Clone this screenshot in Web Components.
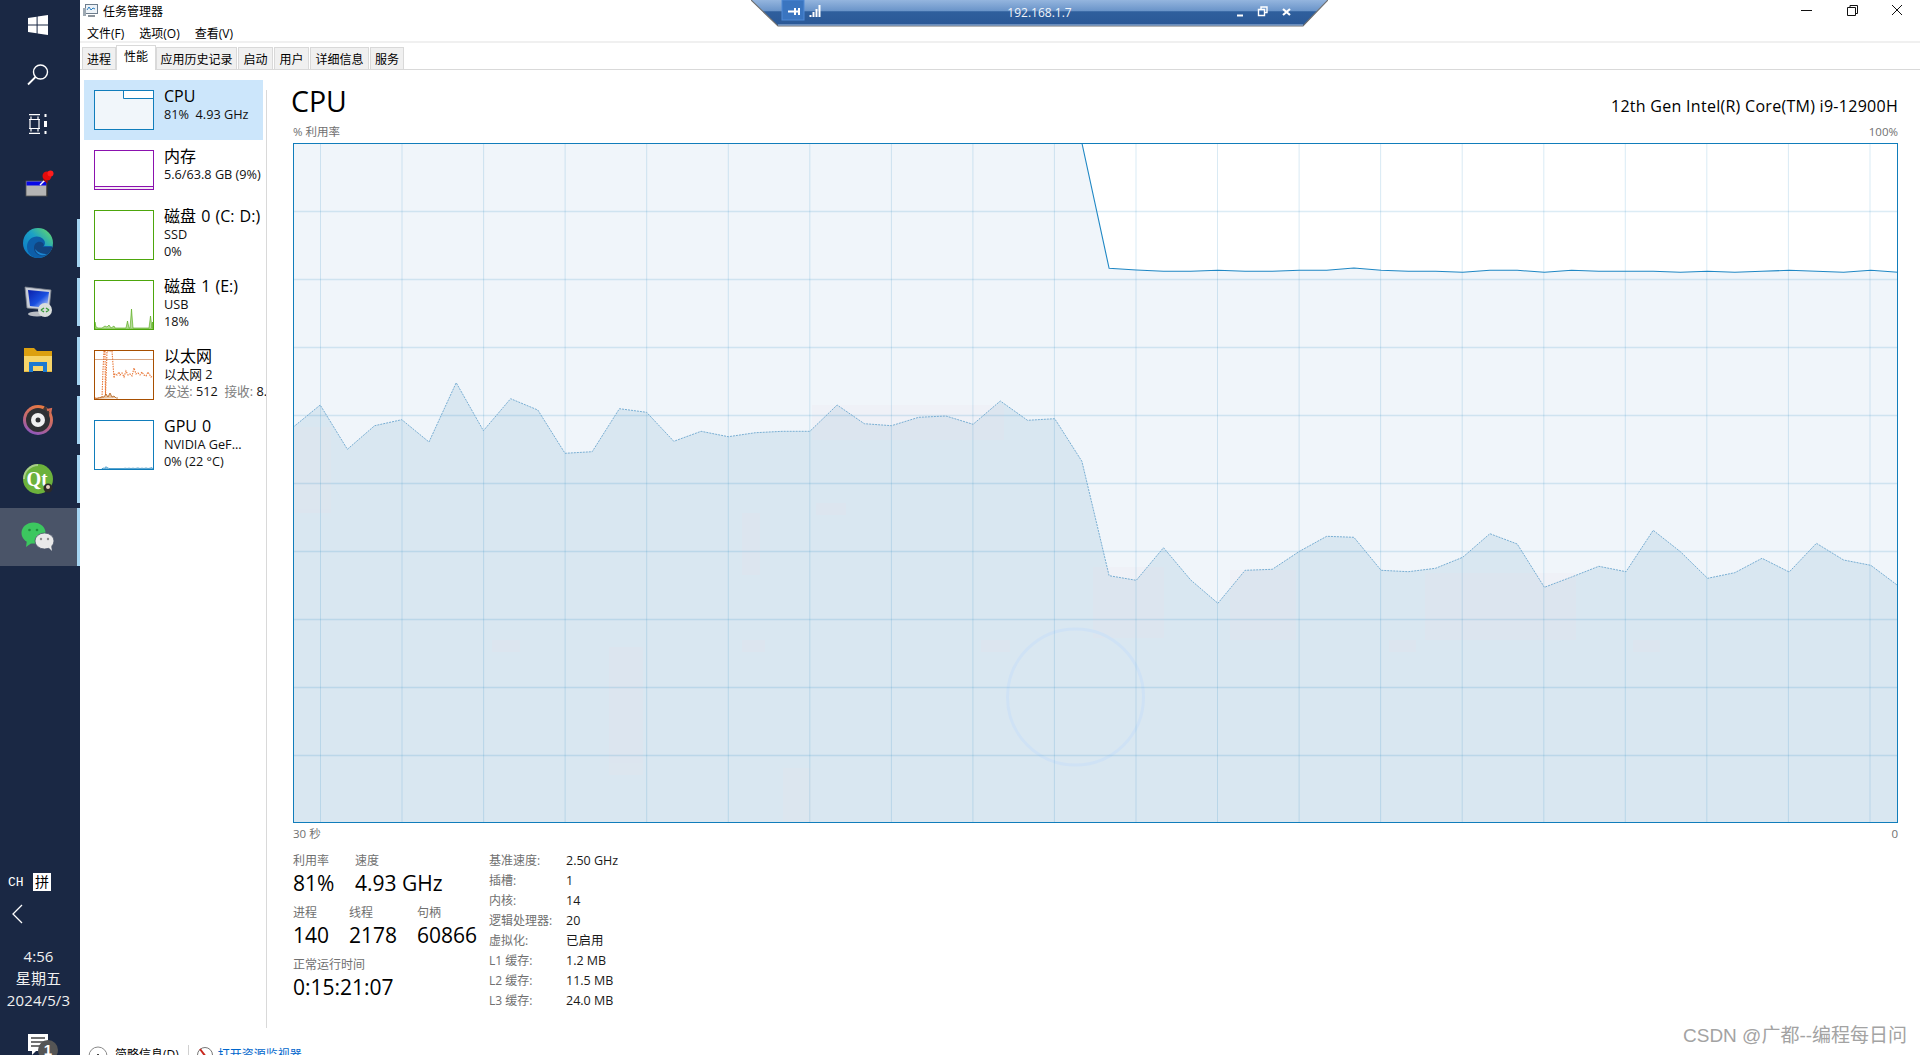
<!DOCTYPE html>
<html lang="zh">
<head>
<meta charset="utf-8">
<title>任务管理器</title>
<style>
html,body{margin:0;padding:0;height:1055px;overflow:hidden;background:#fff}
body{display:flex;font-family:"Open Sans","Noto Sans CJK SC",sans-serif;color:#000}
</style>
</head>
<body>
<x-taskbar>
  <x-tb-item h="50"><svg width="20" height="20" viewBox="0 0 20 20"><path fill="#fff" d="M0 3 8.600 1.700V9.500H0ZM9.600 1.500 20 0V9.500H9.600ZM0 10.500H8.600V18.300L0 17ZM9.600 10.500H20V20L9.600 18.500Z"/></svg></x-tb-item>
  <x-tb-item h="50"><svg width="22" height="22" viewBox="0 0 22 22" fill="none" stroke="#fff" stroke-width="1.400"><circle cx="13.500" cy="8" r="7"/><path d="M8.500 13 1 20.500" stroke-width="1.800"/></svg></x-tb-item>
  <x-tb-item h="48"><svg width="20" height="20" viewBox="0 0 20 20" fill="none" stroke="#fff" stroke-width="1.200"><path d="M1 .7H12M1 19.300H12M3 2.500V5.500M10 2.500V5.500M3 14.500V17.500M10 14.500V17.500M1 5.500H12M1 14.500H12M2 5.500V14.500M11 5.500V14.500"/><path d="M17.500 0V3M17.500 17V20" stroke-width="2"/><rect x="16" y="7" width="3" height="6" fill="#fff" stroke="none"/></svg></x-tb-item>
  <x-tb-item h="59" style="margin-top:6px"><svg width="32" height="32" viewBox="0 0 32 32"><rect x="4" y="13" width="21" height="15" fill="#b4b4b4" stroke="#555" stroke-width=".8"/><rect x="4.500" y="13.500" width="20" height="4" fill="#0707e6"/><path d="M25 28V14" stroke="#222"/><path d="M18 17l6-6" stroke="#fff" stroke-width="1.500"/><circle cx="25" cy="8" r="4.500" fill="#e40b0b"/><circle cx="28.500" cy="5.500" r="3" fill="#ff1d1d"/><path d="M22 11l4 3-1 1-4-3z" fill="#a00"/></svg></x-tb-item>
  <x-tb-item h="59" running><svg width="32" height="32" viewBox="0 0 32 32"><defs><linearGradient id="eg" x1="0" y1="1" x2="1" y2="0"><stop offset="0" stop-color="#0a74c7"/><stop offset=".55" stop-color="#1ba0c6"/><stop offset="1" stop-color="#6fe05d"/></linearGradient></defs><circle cx="16" cy="16" r="15" fill="url(#eg)"/><path d="M5 20C5 12 12 8 18 10 23 12 24 16 22 19H30C29 27 22 31 16 31 10 31 5 26 5 20Z" fill="#0d5ea8"/><path d="M12 21C12 16 16 14 19 15 22 16 23 19 20 20H31C30 22 28 26 24 28 18 30 12 27 12 21Z" fill="#12447f"/><path d="M13 22C14 27 20 30 25 27 21 27 16 26 13 22Z" fill="#1b86d3"/></svg></x-tb-item>
  <x-tb-item h="59" running><svg width="32" height="32" viewBox="0 0 32 32"><ellipse cx="15" cy="28" rx="9" ry="2.500" fill="#b9bcc2"/><path d="M3 1 29 4 27 24 5 22Z" fill="#c9ced8" stroke="#7b818b" stroke-width=".8"/><defs><linearGradient id="rg" x1="0" y1="0" x2="1" y2="1"><stop offset="0" stop-color="#0a1fa8"/><stop offset=".55" stop-color="#1a50e0"/><stop offset="1" stop-color="#d8e6ff"/></linearGradient></defs><path d="M6 4 27 6 25 22 8 20Z" fill="url(#rg)"/><circle cx="23" cy="24" r="7" fill="#d9dedc"/><path d="M19 24l3-2M19 24l3 2M27 24l-3-2M27 24l-3 2" stroke="#3a9a3c" stroke-width="1.500" fill="none"/></svg></x-tb-item>
  <x-tb-item h="59" running><svg width="30" height="26" viewBox="0 0 30 26"><path d="M1 0H11L14 3H29V11H1Z" fill="#dca010"/><path d="M1 8H29V23H1Z" fill="#f6d56a"/><path d="M6 14H24V24H20V18H10V24H6Z" fill="#1b79d1"/><path d="M1 23H6V24H1ZM24 23H29V24H24Z" fill="#e8b93d"/></svg></x-tb-item>
  <x-tb-item h="59" running><svg width="32" height="32" viewBox="0 0 32 32"><defs><linearGradient id="mg" x1=".7" y1="0" x2=".3" y2="1"><stop offset="0" stop-color="#ec7b3d"/><stop offset=".5" stop-color="#c76a6e"/><stop offset="1" stop-color="#8a56c2"/></linearGradient></defs><circle cx="16" cy="16" r="15" fill="url(#mg)"/><circle cx="16" cy="16" r="12" fill="#2f3033"/><path d="M23 2 29 10 26 12 21 5Z" fill="#2f3033" opacity=".9"/><path d="M25 6 29 5 28 11" fill="none" stroke="#d66d55" stroke-width="2"/><circle cx="16" cy="16" r="7" fill="#f0f0f0"/><circle cx="16" cy="16" r="2.500" fill="#2f3033"/></svg></x-tb-item>
  <x-tb-item h="59" running><svg width="32" height="32" viewBox="0 0 32 32"><circle cx="16" cy="16" r="15" fill="#6cb23c"/><path d="M1 16A15 15 0 0 1 16 1V3A13 13 0 0 0 3 16Z" fill="#d9e6c8" opacity=".55"/><text x="15" y="22.500" text-anchor="middle" font-family="Liberation Serif" font-weight="700" font-size="20" textLength="21" lengthAdjust="spacingAndGlyphs" fill="#fff">Qt</text><circle cx="26" cy="25" r="4.500" fill="#2d2a28"/><circle cx="26" cy="24" r="2" fill="#e8d3c2"/></svg></x-tb-item>
  <x-tb-item h="58" running active><svg width="34" height="30" viewBox="0 0 34 30"><ellipse cx="12.500" cy="11" rx="12" ry="10.500" fill="#3cc75f"/><path d="M6 18 5 25 12 20Z" fill="#3cc75f"/><circle cx="8.500" cy="8" r="1.300" fill="#1e8e3c"/><circle cx="16" cy="8" r="1.300" fill="#1e8e3c"/><ellipse cx="23.500" cy="19" rx="9.500" ry="8" fill="#e9e9e9" stroke="#4a5468" stroke-width=".8"/><path d="M27 25 31 29 30 23Z" fill="#e9e9e9"/><circle cx="20" cy="17" r="1.200" fill="#8d8d8d"/><circle cx="27" cy="17" r="1.200" fill="#8d8d8d"/></svg></x-tb-item>
  <x-tb-bottom></x-tb-bottom>
</x-taskbar>

<x-taskmgr>
  <x-titlebar>任务管理器</x-titlebar>
  <x-menubar><span>文件(F)</span><span>选项(O)</span><span>查看(V)</span></x-menubar>
  <x-tabs>
    <x-tab style="width:34px">进程</x-tab>
    <x-tab selected style="width:38px">性能</x-tab>
    <x-tab style="width:81px">应用历史记录</x-tab>
    <x-tab style="width:35px">启动</x-tab>
    <x-tab style="width:35px">用户</x-tab>
    <x-tab style="width:59px">详细信息</x-tab>
    <x-tab style="width:34px">服务</x-tab>
  </x-tabs>
  <x-perf-body>
    <x-side-panel>
      <x-perf-item selected h="60">
        <svg slot="thumb" width="60" height="40" viewBox="0 0 60 40"><rect x=".5" y=".5" width="59" height="39" fill="#f1f6fa"/><path d="M29.500 .5V8.500H59.500V.5Z" fill="#fff" stroke="#117dbb"/><rect x=".5" y=".5" width="59" height="39" fill="none" stroke="#117dbb"/></svg>
        <span slot="title">CPU</span><span>81%&nbsp; 4.93 GHz</span>
      </x-perf-item>
      <x-perf-item h="60">
        <svg slot="thumb" width="60" height="40" viewBox="0 0 60 40"><rect x=".5" y=".5" width="59" height="39" fill="#fff"/><rect x=".5" y="36.500" width="59" height="3" fill="#f4eaf6" stroke="#8b12ae"/><rect x=".5" y=".5" width="59" height="39" fill="none" stroke="#8b12ae"/></svg>
        <span slot="title">内存</span><span>5.6/63.8 GB (9%)</span>
      </x-perf-item>
      <x-perf-item h="70">
        <svg slot="thumb" width="60" height="50" viewBox="0 0 60 50"><rect x=".5" y=".5" width="59" height="49" fill="#fff" stroke="#4da60c"/></svg>
        <span slot="title">磁盘 0 (C: D:)</span><span>SSD</span><br><span>0%</span>
      </x-perf-item>
      <x-perf-item h="70">
        <svg slot="thumb" width="60" height="50" viewBox="0 0 60 50"><path d="M1 49V42L2 47 4 48 8 48 11 46 13 47 15 45 17 48 20 46 21 48 32 48 33.500 41 35 48 36 48 37.500 29 39 48 55 48 56.500 36 58 48 58.500 42 59 49Z" fill="#b5dc98" stroke="#4da60c" stroke-width=".6"/><rect x=".5" y=".5" width="59" height="49" fill="none" stroke="#4da60c"/></svg>
        <span slot="title">磁盘 1 (E:)</span><span>USB</span><br><span>18%</span>
      </x-perf-item>
      <x-perf-item h="70">
        <svg slot="thumb" width="60" height="50" viewBox="0 0 60 50"><rect x=".5" y=".5" width="59" height="49" fill="#fff"/><path d="M1 9.500H59" stroke="#d9a988"/><path d="M1 48 8 48 9 20 10 1 11 1 11.500 46 13 1 15 1 16 1 18 1 20 28 21 24 23 25 25 22 26 25 28 23 30 27 32 21 34 25 36 24 38 26 40 18 42 24 44 23 46 25 48 22 50 25 52 26 54 22 57 27 59 26" fill="none" stroke="#e9793a" stroke-width="1.100" stroke-dasharray="1.500 1"/><path d="M1 49 8 47 10 47 12 44 14 47 16 43 18 47 20 46 22 48 24 48" fill="#e8c4a4" stroke="#a74f01" stroke-width=".7"/><rect x=".5" y=".5" width="59" height="49" fill="none" stroke="#a74f01"/></svg>
        <span slot="title">以太网</span><span>以太网 2</span><br><span class="g"><x-gray>发送:</x-gray> 512&nbsp; <x-gray>接收:</x-gray> 8.0 Kbps</span>
      </x-perf-item>
      <x-perf-item h="70">
        <svg slot="thumb" width="60" height="50" viewBox="0 0 60 50"><rect x=".5" y=".5" width="59" height="49" fill="#fff"/><path d="M8 49V48.500L9 48.500 10 47.500 11 48.500 12 46.500 13 48 14 47.500 15 48.500 30 48.500 31 48 33 48.500 35 48 37 48.500 39 48 41 48.500 44 47.800 46 48.500 48 48 50 48.500 52 47.800 54 48.500 56 48 58 47.500 59 49Z" fill="#a8d0e8" stroke="#117dbb" stroke-width=".5"/><rect x=".5" y=".5" width="59" height="49" fill="none" stroke="#117dbb"/></svg>
        <span slot="title">GPU 0</span><span>NVIDIA GeF...</span><br><span>0% (22 °C)</span>
      </x-perf-item>
    </x-side-panel>
    <x-divider></x-divider>
    <x-cpu-view>
      <x-head-row><span slot="a">CPU</span><span slot="b">12th Gen Intel(R) Core(TM) i9-12900H</span></x-head-row>
      <x-axis-row top><span slot="a">% 利用率</span><span slot="b">100%</span></x-axis-row>
      <x-cpu-graph></x-cpu-graph>
      <x-axis-row><span slot="a">30 秒</span><span slot="b">0</span></x-axis-row>
      <x-stats>
        <x-stat-col>
          <x-stat-row><x-stat w="62" l="利用率" v="81%"></x-stat><x-stat l="速度" v="4.93 GHz"></x-stat></x-stat-row>
          <x-stat-row><x-stat w="56" l="进程" v="140"></x-stat><x-stat w="68" l="线程" v="2178"></x-stat><x-stat l="句柄" v="60866"></x-stat></x-stat-row>
          <x-stat-row><x-stat l="正常运行时间" v="0:15:21:07"></x-stat></x-stat-row>
        </x-stat-col>
        <x-kv-table>
          <x-kv k="基准速度:" v="2.50 GHz"></x-kv>
          <x-kv k="插槽:" v="1"></x-kv>
          <x-kv k="内核:" v="14"></x-kv>
          <x-kv k="逻辑处理器:" v="20"></x-kv>
          <x-kv k="虚拟化:" v="已启用"></x-kv>
          <x-kv k="L1 缓存:" v="1.2 MB"></x-kv>
          <x-kv k="L2 缓存:" v="11.5 MB"></x-kv>
          <x-kv k="L3 缓存:" v="24.0 MB"></x-kv>
        </x-kv-table>
      </x-stats>
    </x-cpu-view>
  </x-perf-body>
  <x-footer></x-footer>
</x-taskmgr>
<x-remote-bar></x-remote-bar>
<x-watermark>CSDN @广都--编程每日问</x-watermark>

<script>
const FONT='"Open Sans","Noto Sans CJK SC",sans-serif';
function def(name,html){
  customElements.define(name,class extends HTMLElement{
    constructor(){super();this.attachShadow({mode:'open'});}
    connectedCallback(){
      const a=n=>this.getAttribute(n);
      this.shadowRoot.innerHTML=typeof html==='function'?html(a):html;
    }
  });
}
def('x-taskbar',`<style>:host{display:flex;flex-direction:column;width:80px;flex:none;height:1055px;background:#1a2844;overflow:hidden}</style><slot></slot>`);
def('x-tb-item',a=>`<style>:host{display:grid;grid-template-columns:77px 3px;height:${a('h')}px;align-items:center;flex:none}
.i{display:flex;align-items:center;justify-content:center;height:100%;padding-right:2px;box-sizing:border-box}
.s{width:3px;height:48px}:host([running]) .s{background:#a6d5f2}
:host([active]){background:#4a5468}:host([active]) .s{height:100%}</style><div class="i"><slot></slot></div><div class="s"></div>`);
def('x-tb-bottom',`<style>:host{display:flex;flex-direction:column;flex:1;justify-content:flex-end;color:#f0f0f0;font-family:${FONT}}
.ime{display:flex;align-items:center;height:18px;padding-left:8px;gap:9px}
.ch{font:13px "Liberation Mono",monospace;color:#fff;width:16px}
.pin{width:18px;height:18px;background:#fff;color:#000;font-size:14px;line-height:18px;text-align:center}
.chev{height:20px;padding:13px 0 0 11px}
.clock{margin-top:21px;text-align:center;font-size:15px;line-height:22px;padding-right:3px;letter-spacing:.1px}
.note{margin-top:22px;height:22px;padding-left:28px;position:relative}
.badge{position:absolute;left:38px;top:7px;width:20px;height:20px;border-radius:50%;background:#555;color:#fff;font:700 15px/20px "Liberation Sans",sans-serif;text-align:center}</style>
<div class="ime"><span class="ch">CH</span><span class="pin">拼</span></div>
<div class="chev"><svg width="14" height="20" viewBox="0 0 14 20" fill="none" stroke="#fff" stroke-width="1.300"><path d="M11 1 2 10l9 9"/></svg></div>
<div class="clock">4:56<br>星期五<br>2024/5/3</div>
<div class="note"><svg width="20" height="22" viewBox="0 0 20 22" style="display:block"><path d="M0 1H20V18H8L4 22V18H0Z" fill="#fff"/><path d="M3 5H17M3 9H17M3 13H17" stroke="#444" stroke-width="1.300"/></svg><span class="badge">1</span></div>`);
def('x-taskmgr',`<style>:host{display:flex;flex-direction:column;flex:1;min-width:0;height:1055px;overflow:hidden;background:#fff}</style><slot></slot>`);
def('x-titlebar',`<style>:host{display:flex;align-items:center;height:21px;flex:none;font-size:12px;padding-left:3px}
.t{margin-left:5px;flex:1}.c{padding-right:18px;align-self:flex-start}
.c svg{display:block}</style>
<svg width="15" height="15" viewBox="0 0 15 15"><rect x="2.500" y="1.500" width="12" height="9" fill="#eef3f8" stroke="#6d7d8d"/><path d="M4 7l2-3 2 3 2-2 2 1" fill="none" stroke="#2b7fc1"/><rect x="0" y="5" width="3" height="8" fill="#9ea9b3"/><path d="M5 13H12" stroke="#8a939c" stroke-width="2"/></svg>
<span class="t"><slot></slot></span>
<div class="c"><svg width="121" height="21" viewBox="0 0 121 21" fill="none" stroke="#111"><path d="M20 10.500H31"/><path d="M66.500 7.500H74.500V15.500H66.500ZM69 7.500V5.500H76.500V13.500H74.500"/><path d="M112 5l10 10M122 5 112 15" transform="translate(-1 0)"/></svg></div>`);
def('x-menubar',`<style>:host{display:flex;height:20px;flex:none;padding-left:7px;gap:15px;font-size:12px;line-height:25px;box-sizing:border-box}</style><slot></slot>`);
def('x-tabs',`<style>:host{display:flex;align-items:flex-end;flex:none;padding-left:2px;gap:1px;border-top:2px solid #f0f0f0;border-bottom:1px solid #d9d9d9;box-sizing:border-box;height:29px}</style><slot></slot>`);
def('x-tab',`<style>:host{display:block;height:22px;background:#f0f0f0;border:1px solid #d9d9d9;border-bottom:0;box-sizing:border-box;font-size:12px;line-height:23px;text-align:center}
:host([selected]){height:25px;background:#fff;margin-bottom:-1px;margin-left:-1px;margin-right:-1px;line-height:22px;width:40px!important;position:relative}</style><slot></slot>`);
def('x-perf-body',`<style>:host{display:flex;height:958px;flex:none}</style><slot></slot>`);
def('x-side-panel',`<style>:host{display:block;width:182px;padding:10px 0 0 4px;flex:none;overflow:hidden}</style><slot></slot>`);
def('x-perf-item',a=>`<style>:host{display:flex;width:182px;height:${a('h')}px;box-sizing:border-box;padding:10px 0 0 10px;gap:10px;overflow:hidden;white-space:nowrap}
:host([selected]){background:linear-gradient(#cce6fb,#cce6fb) no-repeat 0 0/179px 100%}
.th{width:60px;flex:none}.tx{margin-top:-4px;font-size:12.700px;line-height:17px;color:#111}
.ti{font-size:16px;line-height:20px;color:#000;word-spacing:1px}</style>
<div class="th"><slot name="thumb"></slot></div><div class="tx"><div class="ti"><slot name="title"></slot></div><slot></slot></div>`);
def('x-gray',`<style>:host{color:#808080}</style><slot></slot>`);
def('x-divider',`<style>:host{display:block;width:1px;margin-top:20px;background:#d9d9d9;flex:none}</style>`);
def('x-cpu-view',`<style>:host{display:block;width:1605px;margin-left:26px;padding-top:12px;flex:none}</style><slot></slot>`);
def('x-head-row',`<style>:host{display:flex;justify-content:space-between;height:40px;align-items:center}
.a{font-size:28.500px;line-height:38px;margin:-2px 0 0 -2px}.b{font-size:16px;line-height:40px;padding-top:8px;letter-spacing:.28px}</style><span class="a"><slot name="a"></slot></span><span class="b"><slot name="b"></slot></span>`);
def('x-axis-row',`<style>:host{display:flex;justify-content:space-between;height:16px;font-size:11.500px;line-height:16px;color:#707070;margin-top:3px}
:host([top]){margin:2px 0 3px}</style><slot name="a"></slot><slot name="b"></slot>`);
def('x-cpu-graph',()=>{
  const dx=1605/59;
  const low=[427.3,405,449.3,425.7,419.7,442,382.7,430.7,398.7,410,453.3,451.7,408.7,412.3,441.3,431.3,436.7,432.7,431.3,431.3,405,423.7,425.7,417.3,416,424.3,401,420.3,418.7,461.3,575.7,580.3,547.7,580,603.3,570.3,569.3,551.3,536.3,537.3,570.3,571.7,568.3,557.3,533.7,544,587.3,577,566.3,571.7,530.3,551.7,578.3,572.7,558.3,572,543.3,560,565.3,585.7];
  const top=[268.3,270,271.3,271.3,270.3,271.3,271.3,270.3,270.3,268,270.3,271.3,271.3,272.3,270.3,270.3,272.3,270.3,271.3,271.3,271.3,272.3,271.3,272.3,271.3,270.3,271.3,272.3,270.3,272.3];
  const P=(i,y)=>(i*dx).toFixed(1)+','+(y-143).toFixed(1);
  const lowPts=low.map((y,i)=>P(i,y)).join(' ');
  const topPts=P(29,143)+' '+top.map((y,i)=>P(i+30,y)).join(' ');
  let g='';
  for(let k=0;k<20;k++){const x=(27.5+81.55*k).toFixed(1);g+=`<path d="M${x} 0V680"/>`;}
  let h='';
  for(let k=1;k<10;k++){h+=`<path d="M0 ${68*k+.5}H1605"/>`;}
  const patches=[[609,647,34,128],[742,513,18,62],[816,503,30,12],[492,640,28,12],[742,640,23,12],[981,640,29,12],[783,768,28,55],[293,427,38,86],[1093,567,71,71],[1230,570,66,70],[1425,573,151,67],[1389,640,27,12],[1633,640,27,12],[812,405,192,35]]
    .map(r=>`<rect x="${r[0]-293}" y="${r[1]-143}" width="${r[2]}" height="${r[3]}"/>`).join('');
  return `<style>:host{display:block;width:1605px;height:680px}svg{display:block}</style>
<svg width="1605" height="680" viewBox="0 0 1605 680">
<rect width="1605" height="680" fill="#fff"/>
<polygon fill="#f0f5fa" points="0,0 ${topPts} 1605,680 0,680"/>
<polygon fill="#d9e7f1" points="0,680 ${lowPts} 1605,680"/>
<g fill="#efe0e8" opacity=".16">${patches}</g>
<circle cx="782.500" cy="554" r="68" fill="none" stroke="#cfe2f5" stroke-width="3"/>
<g stroke="#117dbb" stroke-opacity=".16" stroke-width="1" fill="none">${g}</g>
<g stroke="#117dbb" stroke-opacity=".15" stroke-width="1.300" fill="none">${h}</g>
<polyline fill="none" stroke="#78aed3" stroke-width="1" stroke-dasharray="2 1" points="${lowPts}"/>
<polyline fill="none" stroke="#1f87c4" stroke-width="1.100" points="${topPts}"/>
<rect x=".5" y=".5" width="1604" height="679" fill="none" stroke="#117dbb" stroke-width="1"/>
</svg>`;
});
def('x-stats',`<style>:host{display:flex;margin-top:11px}</style><slot></slot>`);
def('x-stat-col',`<style>:host{display:flex;flex-direction:column;width:196px;flex:none;gap:8px}</style><slot></slot>`);
def('x-stat-row',`<style>:host{display:flex}</style><slot></slot>`);
def('x-stat',a=>`<style>:host{display:block;${a('w')?`width:${a('w')}px;`:''}white-space:nowrap}
.l{font-size:12px;line-height:16px;color:#707070}.v{font-size:21px;line-height:28px;color:#000}</style><div class="l">${a('l')}</div><div class="v">${a('v')}</div>`);
def('x-kv-table',`<style>:host{display:block;margin-top:-2px}</style><slot></slot>`);
def('x-kv',a=>`<style>:host{display:flex;height:20px;line-height:20px;font-size:12px;white-space:nowrap}
.k{width:77px;color:#707070}.v{color:#1a1a1a;font-size:12.500px}</style><span class="k">${a('k')}</span><span class="v">${a('v')}</span>`);
def('x-footer',`<style>:host{display:flex;align-items:flex-start;padding:17px 0 0 8px;font-size:12px;line-height:20px;height:27px;flex:none;box-sizing:content-box}
.b{margin-left:7px}.d{width:1px;height:20px;background:#d0d0d0;margin:0 8px 0 9px}.l{color:#0066cc;margin-left:5px}</style>
<svg width="20" height="20" viewBox="0 0 20 20" fill="none" stroke="#8a8a8a"><circle cx="10" cy="11" r="9"/><path d="M6 13l4-4 4 4" stroke="#444"/></svg>
<span class="b">简略信息(D)</span><span class="d"></span>
<svg width="16" height="20" viewBox="0 0 16 20"><circle cx="8" cy="10" r="7.500" fill="#fff" stroke="#777"/><path d="M3 4l9 12" stroke="#c8281e" stroke-width="2"/></svg>
<span class="l">打开资源监视器</span>`);
def('x-remote-bar',`<style>:host{position:absolute;left:751px;top:0;width:577px;height:27px;display:block}
svg{position:absolute;left:0;top:0}
.t{position:absolute;left:0;right:0;top:4px;text-align:center;font:12px/17px ${FONT};color:#f2f5fa}</style>
<svg width="577" height="27" viewBox="0 0 577 27">
<defs><linearGradient id="rb" x1="0" y1="0" x2="0" y2="1"><stop offset="0" stop-color="#94b5de"/><stop offset=".42" stop-color="#6a94c9"/><stop offset=".45" stop-color="#2f5f9d"/><stop offset="1" stop-color="#2a5896"/></linearGradient></defs>
<path d="M0 0H577L552 26H27Z" fill="url(#rb)"/>
<path d="M0 0 27 26H552L577 0" fill="none" stroke="#6f6f6f" stroke-width="1.200"/>
<path d="M27 25H552" stroke="#a9c3e4"/>
<rect x="31" y="0" width="22" height="20" fill="#3a75c0" stroke="#4f8ad6"/>
<path d="M37 11.500H44M44 8V15M48 8V15M44 11.500H48" stroke="#fff" stroke-width="2" fill="none"/>
<path d="M59.500 17V15M62.500 17V12M65.500 17V9M68.500 17V5" stroke="#fff" stroke-width="2"/>
<path d="M486 15.500H492" stroke="#fff" stroke-width="2"/>
<path d="M507.500 9.500H513.500V15.500H507.500ZM510 9V7H516V12.500H514" fill="none" stroke="#fff" stroke-width="1.400"/>
<path d="M532 9l7 6M539 9l-7 6" stroke="#fff" stroke-width="2.200"/>
</svg><div class="t">192.168.1.7</div>`);
def('x-watermark',`<style>:host{position:absolute;left:1683px;top:1024px;font:19px/24px "Liberation Sans","Noto Sans CJK SC",sans-serif;color:#a3a3a3;white-space:nowrap;text-shadow:0 0 1px #fff}</style><slot></slot>`);
</script>
</body>
</html>
